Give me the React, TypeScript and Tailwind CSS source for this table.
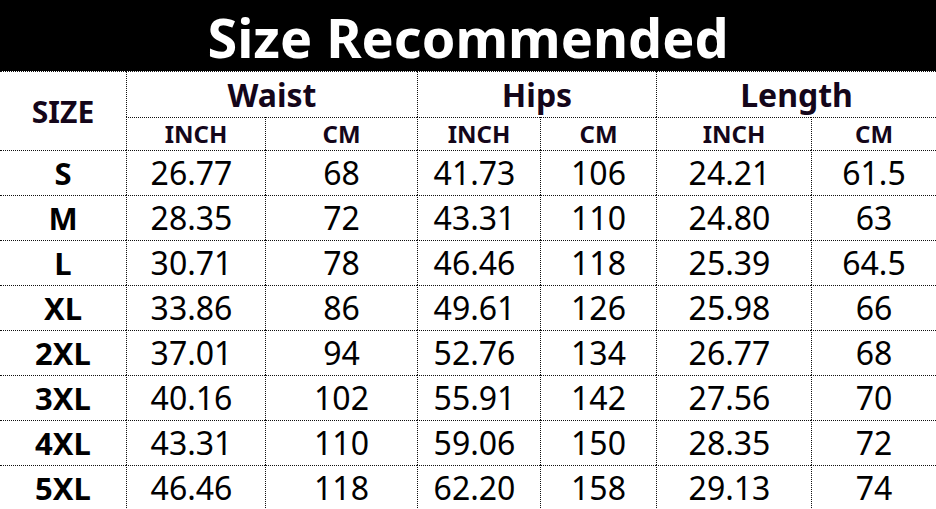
import React from "react";

const rows: [string, string, string, string, string, string, string][] = [
  ["S", "26.77", "68", "41.73", "106", "24.21", "61.5"],
  ["M", "28.35", "72", "43.31", "110", "24.80", "63"],
  ["L", "30.71", "78", "46.46", "118", "25.39", "64.5"],
  ["XL", "33.86", "86", "49.61", "126", "25.98", "66"],
  ["2XL", "37.01", "94", "52.76", "134", "26.77", "68"],
  ["3XL", "40.16", "102", "55.91", "142", "27.56", "70"],
  ["4XL", "43.31", "110", "59.06", "150", "28.35", "72"],
  ["5XL", "46.46", "118", "62.20", "158", "29.13", "74"],
];

const cell = "flex items-center justify-center border-t border-dotted border-[#111]";

export default function App() {
  return (
    <div className="w-[936px] h-[509px] overflow-hidden bg-white text-black" style={{ fontFamily: '"Noto Sans", "Open Sans", sans-serif' }}>
      <div className="h-[71px] bg-black flex items-center justify-center">
        <span className="text-white font-bold text-[54px] leading-none pt-[2px]">Size Recommended</span>
      </div>
      <div className="grid grid-cols-[126px_139px_152px_123px_116px_155px_125px] grid-rows-[46px_33px_repeat(8,45px)]">
        <div className={`${cell} row-span-2 font-bold text-[30px] text-[#14061a]`}>SIZE</div>
        <div className={`${cell} col-span-2 border-l font-bold text-[32px] text-[#14061a]`}>Waist</div>
        <div className={`${cell} col-span-2 border-l font-bold text-[32px] text-[#14061a]`}>Hips</div>
        <div className={`${cell} col-span-2 border-l font-bold text-[32px] text-[#14061a]`}>Length</div>
        {["INCH", "CM", "INCH", "CM", "INCH", "CM"].map((t, i) => (
          <div key={i} className={`${cell} border-l font-bold text-[24px] text-[#14061a]`}>{t}</div>
        ))}
        {rows.map((r) =>
          r.map((v, i) => (
            <div
              key={r[0] + i}
              className={`${cell} ${i === 0 ? "font-bold text-[31px]" : i % 2 === 1 ? "border-l text-[32px] pr-[9px]" : "border-l text-[32px]"}`}
            >
              {v}
            </div>
          ))
        )}
      </div>
    </div>
  );
}
